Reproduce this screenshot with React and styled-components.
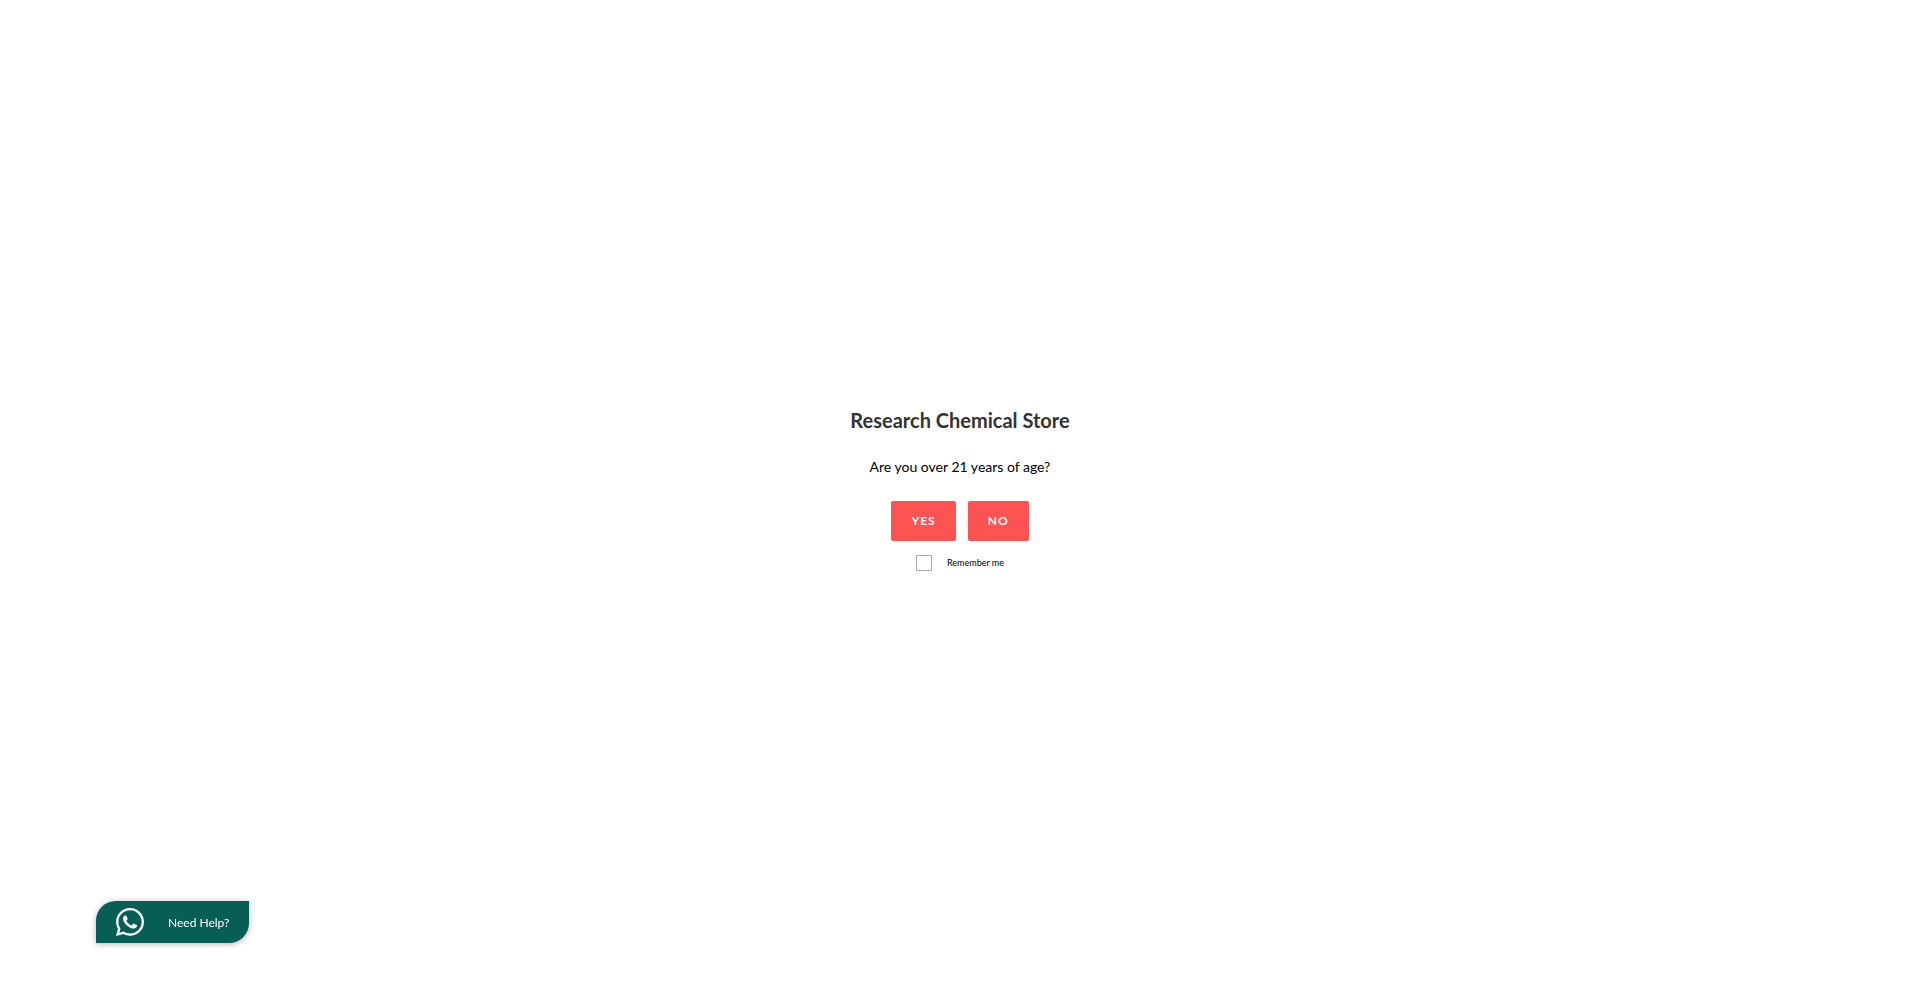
import React from 'react';
import styled, { createGlobalStyle } from 'styled-components';
import { FaWhatsapp } from 'react-icons/fa';

const GlobalStyle = createGlobalStyle`
  * {
    box-sizing: border-box;
  }
  body {
    margin: 0;
    background: #fff;
    color: #000;
    font-family: Lato, sans-serif;
  }
`;

const Page = styled.main`
  display: flex;
  align-items: center;
  justify-content: center;
  min-height: 100vh;
  padding-bottom: 16px;
`;

const Gate = styled.form`
  display: flex;
  flex-direction: column;
  align-items: center;
`;

const Title = styled.h1`
  margin: 0 0 18px;
  color: #333;
  font-size: 20px;
  line-height: 30px;
`;

const Question = styled.p`
  margin: 0 0 20px;
  font-size: 14px;
  line-height: 28px;
`;

const Answers = styled.div`
  display: flex;
  gap: 12px;
  margin-bottom: 12px;
`;

const AnswerButton = styled.button`
  height: 40px;
  padding: 0 20px;
  border: 0;
  border-radius: 2px;
  background: #ff5252;
  color: #fff;
  font-family: inherit;
  font-size: 12px;
  font-weight: 700;
  letter-spacing: 1px;
  text-transform: uppercase;
  cursor: pointer;
`;

const Remember = styled.label`
  display: flex;
  align-items: center;
  gap: 15px;
  font-size: 9px;
  line-height: 20px;
`;

const Checkbox = styled.input`
  appearance: none;
  width: 16px;
  height: 16px;
  margin: 0;
  border: 1px solid #aaa;
  background: #fff;
`;

const HelpLink = styled.a`
  position: fixed;
  bottom: 50px;
  left: 5%;
  display: flex;
  align-items: center;
  gap: 22px;
  height: 42px;
  padding: 0 20px 0 18px;
  border-radius: 20px 0;
  background: #075e54;
  box-shadow: 0 1px 6px rgba(0, 0, 0, 0.3);
  color: #fff;
  font-size: 12px;
  text-decoration: none;
`;

export default function App() {
  return (
    <>
      <GlobalStyle />
      <Page>
        <Gate onSubmit={e => e.preventDefault()}>
          <Title>Research Chemical Store</Title>
          <Question>Are you over 21 years of age?</Question>
          <Answers>
            <AnswerButton type="submit">Yes</AnswerButton>
            <AnswerButton type="button">No</AnswerButton>
          </Answers>
          <Remember htmlFor="remember">
            <Checkbox id="remember" type="checkbox" />
            Remember me
          </Remember>
        </Gate>
      </Page>
      <HelpLink href="#help">
        <FaWhatsapp size={32} />
        Need Help?
      </HelpLink>
    </>
  );
}
